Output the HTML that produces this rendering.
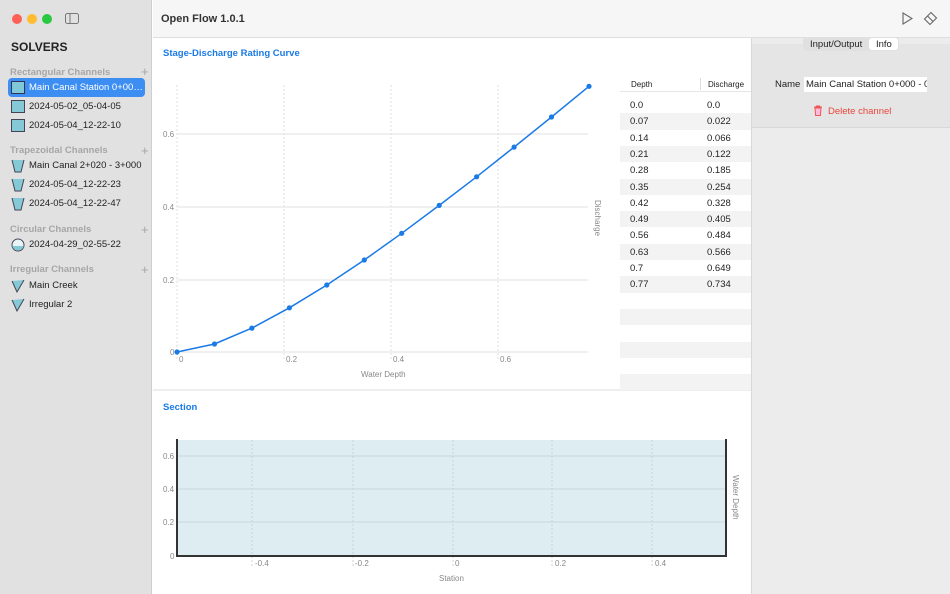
<!DOCTYPE html>
<html><head><meta charset="utf-8">
<style>
*{margin:0;padding:0;box-sizing:border-box}
body{width:950px;height:594px;overflow:hidden;font-family:"Liberation Sans",sans-serif;background:#fff;position:relative;font-size:11px;color:#222}
.abs{position:absolute}
#side{left:0;top:0;width:152px;height:594px;background:#e2e1e1;border-right:1px solid #cfcfcf}
.dot{position:absolute;top:14px;width:10px;height:10px;border-radius:50%}
.sec{position:absolute;left:10px;font-size:9.5px;font-weight:bold;color:#a6a6a6}
.plus{position:absolute;left:141px;font-size:13px;color:#a6a6a6;line-height:1}
.item{position:absolute;left:8px;width:137px;height:19px;font-size:9.5px;color:#222;line-height:19px;padding-left:21px;border-radius:4px;white-space:nowrap;overflow:hidden;text-overflow:ellipsis}
.item svg{position:absolute;left:3px;top:3px}
#title{left:153px;top:0;width:797px;height:38px;background:#f6f6f6;border-bottom:1px solid #dedede}
.tbl{position:absolute;left:620px;width:131px;height:16.3px;font-size:9.5px;line-height:17px}
.tbl span{position:absolute}
.g{background:#f3f3f3}
</style></head><body>
<div id="side" class="abs">
 <div class="dot" style="left:12px;background:#fe5f57"></div>
 <div class="dot" style="left:27px;background:#febc2e"></div>
 <div class="dot" style="left:42px;background:#28c840"></div>
 <svg class="abs" style="left:65px;top:13px" width="14" height="11"><rect x="0.5" y="0.5" width="13" height="10" rx="2" fill="none" stroke="#777"/><line x1="5" y1="1" x2="5" y2="10" stroke="#777"/></svg>
 <div class="abs" style="left:11px;top:40px;font-size:12px;font-weight:bold;color:#222">SOLVERS</div>
 <div class="sec" style="top:67px">Rectangular Channels</div><div class="plus" style="top:65px">+</div>
 <div class="item" style="top:78px;background:#3d8ef3;color:#fff"><svg width="14" height="13"><rect x="0.5" y="0.5" width="13" height="12" fill="#7ec8d8" stroke="#335"/></svg>Main Canal Station 0+000 - 0+500</div>
 <div class="item" style="top:97px"><svg width="14" height="13"><rect x="0.5" y="0.5" width="13" height="12" fill="#86c9d6" stroke="#445"/></svg>2024-05-02_05-04-05</div>
 <div class="item" style="top:116px"><svg width="14" height="13"><rect x="0.5" y="0.5" width="13" height="12" fill="#86c9d6" stroke="#445"/></svg>2024-05-04_12-22-10</div>
 <div class="sec" style="top:145px">Trapezoidal Channels</div><div class="plus" style="top:144px">+</div>
 <div class="item" style="top:156px"><svg width="14" height="14"><path d="M1 1 L4 13 L10 13 L13 1" fill="#86c9d6" stroke="#445"/></svg>Main Canal 2+020 - 3+000</div>
 <div class="item" style="top:175px"><svg width="14" height="14"><path d="M1 1 L4 13 L10 13 L13 1" fill="#86c9d6" stroke="#445"/></svg>2024-05-04_12-22-23</div>
 <div class="item" style="top:194px"><svg width="14" height="14"><path d="M1 1 L4 13 L10 13 L13 1" fill="#86c9d6" stroke="#445"/></svg>2024-05-04_12-22-47</div>
 <div class="sec" style="top:224px">Circular Channels</div><div class="plus" style="top:223px">+</div>
 <div class="item" style="top:235px"><svg width="14" height="14"><circle cx="7" cy="7" r="6" fill="#e8f4f6" stroke="#445"/><path d="M1.2 8 A6 6 0 0 0 12.8 8 Z" fill="#86c9d6"/></svg>2024-04-29_02-55-22</div>
 <div class="sec" style="top:264px">Irregular Channels</div><div class="plus" style="top:263px">+</div>
 <div class="item" style="top:276px"><svg width="14" height="14"><path d="M1 2 L6 13 L13 1" fill="#86c9d6" stroke="#445"/></svg>Main Creek</div>
 <div class="item" style="top:295px"><svg width="14" height="14"><path d="M1 2 L6 13 L13 1" fill="#86c9d6" stroke="#445"/></svg>Irregular 2</div>
</div>
<div id="title" class="abs">
 <div class="abs" style="left:8px;top:13px;font-size:11px;font-weight:bold;color:#333">Open Flow 1.0.1</div>
 <svg class="abs" style="left:748px;top:12px" width="12" height="13"><path d="M2 1 L11 6.5 L2 12 Z" fill="none" stroke="#666" stroke-width="1.1"/></svg>
 <svg class="abs" style="left:770px;top:11px" width="15" height="15"><path d="M8 1.5 L13.5 7 L7 13.5 L1.5 8 Z M4.5 5 L10 10.5" fill="none" stroke="#666" stroke-width="1.1"/></svg>
</div>
<div class="abs" style="left:751px;top:38px;width:199px;height:556px;background:#edecec;border-left:1px solid #d8d8d8"></div>
<div class="abs" style="left:752px;top:44px;width:198px;height:84px;background:#e6e5e5;border-bottom:1px solid #d8d8d8"></div>
<div class="abs" style="left:803px;top:37px;width:96px;height:14px;background:#e0e0e0;border-radius:4px"></div>
<div class="abs" style="left:869px;top:38px;width:29px;height:12px;background:#fff;border-radius:3px"></div>
<div class="abs" style="left:810px;top:39px;font-size:9.5px">Input/Output</div>
<div class="abs" style="left:876px;top:39px;font-size:9.5px">Info</div>
<div class="abs" style="left:775px;top:79px;font-size:9.5px">Name</div>
<div class="abs" style="left:804px;top:77px;width:123px;height:15px;background:#fff;font-size:9.5px;line-height:15px;padding-left:2px;white-space:nowrap;overflow:hidden">Main Canal Station 0+000 - 0</div>
<svg class="abs" style="left:813px;top:105px" width="10" height="11"><path d="M1 2 H9 M3.5 2 V1 H6.5 V2 M2 3 L2.6 10.5 H7.4 L8 3 Z" fill="#fbd" stroke="#e55" stroke-width="1"/></svg>
<div class="abs" style="left:828px;top:106px;font-size:9.5px;color:#e8453c">Delete channel</div>
<div class="abs" style="left:163px;top:48px;font-size:9.5px;font-weight:bold;color:#1a7ae6">Stage-Discharge Rating Curve</div>
<svg class="abs" style="left:153px;top:38px" width="598" height="556">
 <g transform="translate(-153,-38)" font-family="Liberation Sans" font-size="8" fill="#888">
  <g stroke="#ddd" stroke-dasharray="2,2"><line x1="177" y1="85" x2="177" y2="360"/><line x1="284" y1="85" x2="284" y2="360"/><line x1="391" y1="85" x2="391" y2="360"/><line x1="498" y1="85" x2="498" y2="360"/></g>
  <g stroke="#e2e2e2"><line x1="177" y1="134" x2="588" y2="134"/><line x1="177" y1="207" x2="588" y2="207"/><line x1="177" y1="280" x2="588" y2="280"/><line x1="177" y1="352" x2="588" y2="352"/></g>
  <text x="163" y="137">0.6</text><text x="163" y="210">0.4</text><text x="163" y="283">0.2</text><text x="170" y="355">0</text>
  <text x="179" y="362">0</text><text x="286" y="362">0.2</text><text x="393" y="362">0.4</text><text x="500" y="362">0.6</text>
  <text x="361" y="377">Water Depth</text>
  <text transform="translate(595,200) rotate(90)">Discharge</text>
  <polyline fill="none" stroke="#1a7ae6" stroke-width="1.5" points="177,352 214.5,344 251.9,328.1 289.4,307.8 326.8,285 364.3,260 401.7,233.3 439.2,205.4 476.6,176.8 514.1,147.1 551.5,117 589,86.3"/>
  <g fill="#1a7ae6"><circle cx="177" cy="352" r="2.6"/><circle cx="214.5" cy="344" r="2.6"/><circle cx="251.9" cy="328.1" r="2.6"/><circle cx="289.4" cy="307.8" r="2.6"/><circle cx="326.8" cy="285" r="2.6"/><circle cx="364.3" cy="260" r="2.6"/><circle cx="401.7" cy="233.3" r="2.6"/><circle cx="439.2" cy="205.4" r="2.6"/><circle cx="476.6" cy="176.8" r="2.6"/><circle cx="514.1" cy="147.1" r="2.6"/><circle cx="551.5" cy="117" r="2.6"/><circle cx="589" cy="86.3" r="2.6"/></g>
  <line x1="153" y1="390" x2="751" y2="390" stroke="#ddd"/>
  <rect x="177" y="440" width="549" height="116" fill="#deedf2"/>
  <g stroke="#c8d6db"><line x1="177" y1="456" x2="726" y2="456"/><line x1="177" y1="489" x2="726" y2="489"/><line x1="177" y1="522" x2="726" y2="522"/></g>
  <g stroke="#c8d3d8" stroke-dasharray="2,2"><line x1="252" y1="440" x2="252" y2="566"/><line x1="353" y1="440" x2="353" y2="566"/><line x1="453" y1="440" x2="453" y2="566"/><line x1="552" y1="440" x2="552" y2="566"/><line x1="652" y1="440" x2="652" y2="566"/></g>
  <g stroke="#333" stroke-width="2"><line x1="177" y1="439" x2="177" y2="556"/><line x1="726" y1="439" x2="726" y2="556"/><line x1="176" y1="556" x2="727" y2="556"/></g>
  <text x="163" y="459">0.6</text><text x="163" y="492">0.4</text><text x="163" y="525">0.2</text><text x="170" y="559">0</text>
  <text x="255" y="566">-0.4</text><text x="355" y="566">-0.2</text><text x="455" y="566">0</text><text x="555" y="566">0.2</text><text x="655" y="566">0.4</text>
  <text x="439" y="581">Station</text>
  <text transform="translate(733,475) rotate(90)">Water Depth</text>
 </g>
</svg>
<div class="abs" style="left:163px;top:402px;font-size:9.5px;font-weight:bold;color:#1a7ae6">Section</div>
<div class="tbl" style="top:76px;border-bottom:1px solid #e6e6e6"><span style="left:11px;font-size:8px">Depth</span><span style="left:80px;top:2px;height:12px;border-left:1px solid #ddd"></span><span style="left:88px;font-size:8px">Discharge</span></div>
<div class="tbl" style="top:97px"><span style="left:10px">0.0</span><span style="left:87px">0.0</span></div>
<div class="tbl g" style="top:113.3px"><span style="left:10px">0.07</span><span style="left:87px">0.022</span></div>
<div class="tbl" style="top:129.6px"><span style="left:10px">0.14</span><span style="left:87px">0.066</span></div>
<div class="tbl g" style="top:145.9px"><span style="left:10px">0.21</span><span style="left:87px">0.122</span></div>
<div class="tbl" style="top:162.2px"><span style="left:10px">0.28</span><span style="left:87px">0.185</span></div>
<div class="tbl g" style="top:178.5px"><span style="left:10px">0.35</span><span style="left:87px">0.254</span></div>
<div class="tbl" style="top:194.8px"><span style="left:10px">0.42</span><span style="left:87px">0.328</span></div>
<div class="tbl g" style="top:211.1px"><span style="left:10px">0.49</span><span style="left:87px">0.405</span></div>
<div class="tbl" style="top:227.4px"><span style="left:10px">0.56</span><span style="left:87px">0.484</span></div>
<div class="tbl g" style="top:243.7px"><span style="left:10px">0.63</span><span style="left:87px">0.566</span></div>
<div class="tbl" style="top:260px"><span style="left:10px">0.7</span><span style="left:87px">0.649</span></div>
<div class="tbl g" style="top:276.3px"><span style="left:10px">0.77</span><span style="left:87px">0.734</span></div>
<div class="tbl g" style="top:308.9px"></div>
<div class="tbl g" style="top:341.5px"></div>
<div class="tbl g" style="top:374px;height:16px"></div>
</body></html>
